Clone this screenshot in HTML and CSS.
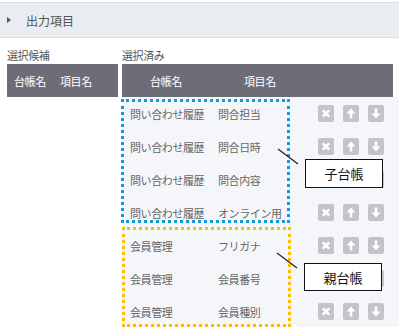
FILE: index.html
```html
<!DOCTYPE html>
<html lang="ja">
<head>
<meta charset="utf-8">
<link rel="stylesheet" href="styles.css">
</head>
<body>
<div class="topbar"><span class="tri"></span><span class="title">出力項目</span></div>
<div class="panes">
  <div class="pane left">
    <div class="label">選択候補</div>
    <div class="thead"><span class="h1">台帳名</span><span>項目名</span></div>
  </div>
  <div class="pane right">
    <div class="label">選択済み</div>
    <div class="thead"><span class="h1">台帳名</span><span>項目名</span></div>
    <div class="list">
      <div class="row"><span class="c1">問い合わせ履歴</span><span class="c2">問合担当</span><span class="btns"><span class="btn"><svg viewBox="0 0 16 17"><path d="M4.8 5.3l6.4 6.4M11.2 5.3l-6.4 6.4"/></svg></span><span class="btn"><svg viewBox="0 0 16 17"><path class="f" d="M8 3.5l4.5 5H3.5z"/><path d="M8 7.5v6"/></svg></span><span class="btn"><svg viewBox="0 0 16 17"><path class="f" d="M8 13.5l4.5-5H3.5z"/><path d="M8 3.5v6"/></svg></span></span></div>
      <div class="row"><span class="c1">問い合わせ履歴</span><span class="c2">問合日時</span><span class="btns"><span class="btn"><svg viewBox="0 0 16 17"><path d="M4.8 5.3l6.4 6.4M11.2 5.3l-6.4 6.4"/></svg></span><span class="btn"><svg viewBox="0 0 16 17"><path class="f" d="M8 3.5l4.5 5H3.5z"/><path d="M8 7.5v6"/></svg></span><span class="btn"><svg viewBox="0 0 16 17"><path class="f" d="M8 13.5l4.5-5H3.5z"/><path d="M8 3.5v6"/></svg></span></span></div>
      <div class="row"><span class="c1">問い合わせ履歴</span><span class="c2">問合内容</span><span class="btns"><span class="btn"><svg viewBox="0 0 16 17"><path d="M4.8 5.3l6.4 6.4M11.2 5.3l-6.4 6.4"/></svg></span><span class="btn"><svg viewBox="0 0 16 17"><path class="f" d="M8 3.5l4.5 5H3.5z"/><path d="M8 7.5v6"/></svg></span><span class="btn"><svg viewBox="0 0 16 17"><path class="f" d="M8 13.5l4.5-5H3.5z"/><path d="M8 3.5v6"/></svg></span></span></div>
      <div class="row"><span class="c1">問い合わせ履歴</span><span class="c2">オンライン用</span><span class="btns"><span class="btn"><svg viewBox="0 0 16 17"><path d="M4.8 5.3l6.4 6.4M11.2 5.3l-6.4 6.4"/></svg></span><span class="btn"><svg viewBox="0 0 16 17"><path class="f" d="M8 3.5l4.5 5H3.5z"/><path d="M8 7.5v6"/></svg></span><span class="btn"><svg viewBox="0 0 16 17"><path class="f" d="M8 13.5l4.5-5H3.5z"/><path d="M8 3.5v6"/></svg></span></span></div>
      <div class="row"><span class="c1">会員管理</span><span class="c2">フリガナ</span><span class="btns"><span class="btn"><svg viewBox="0 0 16 17"><path d="M4.8 5.3l6.4 6.4M11.2 5.3l-6.4 6.4"/></svg></span><span class="btn"><svg viewBox="0 0 16 17"><path class="f" d="M8 3.5l4.5 5H3.5z"/><path d="M8 7.5v6"/></svg></span><span class="btn"><svg viewBox="0 0 16 17"><path class="f" d="M8 13.5l4.5-5H3.5z"/><path d="M8 3.5v6"/></svg></span></span></div>
      <div class="row"><span class="c1">会員管理</span><span class="c2">会員番号</span><span class="btns"><span class="btn"><svg viewBox="0 0 16 17"><path d="M4.8 5.3l6.4 6.4M11.2 5.3l-6.4 6.4"/></svg></span><span class="btn"><svg viewBox="0 0 16 17"><path class="f" d="M8 3.5l4.5 5H3.5z"/><path d="M8 7.5v6"/></svg></span><span class="btn"><svg viewBox="0 0 16 17"><path class="f" d="M8 13.5l4.5-5H3.5z"/><path d="M8 3.5v6"/></svg></span></span></div>
      <div class="row"><span class="c1">会員管理</span><span class="c2">会員種別</span><span class="btns"><span class="btn"><svg viewBox="0 0 16 17"><path d="M4.8 5.3l6.4 6.4M11.2 5.3l-6.4 6.4"/></svg></span><span class="btn"><svg viewBox="0 0 16 17"><path class="f" d="M8 3.5l4.5 5H3.5z"/><path d="M8 7.5v6"/></svg></span><span class="btn"><svg viewBox="0 0 16 17"><path class="f" d="M8 13.5l4.5-5H3.5z"/><path d="M8 3.5v6"/></svg></span></span></div>

      <div class="group blue"></div>
      <div class="group orange"></div>
      <svg class="leaders" viewBox="0 0 277 231"><path d="M156 52L176 67M155 156L175 171"/></svg>
      <div class="callout child">子台帳</div>
      <div class="callout parent">親台帳</div>
    </div>
  </div>
</div>
</body>
</html>
```

FILE: styles.css
```css
html, body {
  margin: 0;
  padding: 0;
  background: #fff;
  font-family: "Noto Sans CJK JP", "Noto Sans", sans-serif;
}

.topbar {
  margin-top: 2px;
  height: 34px;
  border-top: 1px solid #dcdfe3;
  border-bottom: 1px solid #dcdfe3;
  background: #e9ecf0;
  display: flex;
  align-items: center;
  padding-left: 7px;
}

.tri {
  width: 0;
  height: 0;
  border-left: 4px solid #555;
  border-top: 3.5px solid transparent;
  border-bottom: 3.5px solid transparent;
  margin-right: 15px;
}

.title {
  font-size: 12px;
  color: #555;
}

.panes {
  display: flex;
  gap: 4px;
  padding-left: 7px;
  margin-top: 8px;
}

.pane.left {
  width: 111px;
}

.pane.right {
  flex: 1;
}

.label {
  font-size: 11px;
  letter-spacing: -0.4px;
  line-height: 18px;
  color: #555;
}

.thead {
  height: 33px;
  background: #6e6d77;
  color: #fff;
  font-size: 11px;
  letter-spacing: -0.4px;
  display: flex;
  align-items: center;
}

.left .thead {
  padding-left: 7px;
}

.left .thead .h1 {
  width: 46px;
}

.right .thead {
  margin-right: 6px;
  padding-left: 28px;
}

.right .thead .h1 {
  width: 94px;
}

.list {
  position: relative;
  background: #f5f6fa;
  height: 230px;
}

.row {
  height: 33px;
  display: flex;
  align-items: center;
  padding-left: 8px;
  font-size: 11px;
  letter-spacing: -0.4px;
  color: #666;
}

.c1 {
  width: 88px;
  white-space: nowrap;
}

.c2 {
  width: 100px;
  white-space: nowrap;
}

.btns {
  display: flex;
  gap: 9px;
}

.btn {
  width: 16px;
  height: 17px;
  background: #c2c4c7;
  border-radius: 2px;
  display: flex;
}

.btn svg {
  width: 16px;
  height: 17px;
  fill: none;
  stroke: #fff;
  stroke-width: 2.6;
}

.btn svg .f {
  fill: #fff;
  stroke: none;
}

.group {
  position: absolute;
  box-sizing: border-box;
  width: 169px;
}

.group.blue {
  left: -1px;
  top: 2px;
  height: 124px;
  border: 3px dotted #119cd8;
}

.group.orange {
  left: 0;
  top: 130px;
  height: 100px;
  border: 3px dotted #fbbc05;
}

.leaders {
  position: absolute;
  left: 0;
  top: 0;
  width: 277px;
  height: 231px;
  fill: none;
  stroke: #222;
  stroke-width: 1.2;
}

.callout {
  position: absolute;
  box-sizing: border-box;
  width: 78px;
  border: 1px solid #111;
  background: #fff;
  color: #111;
  font-size: 13px;
  display: flex;
  align-items: center;
  justify-content: center;
}

.callout.child {
  left: 183px;
  top: 62px;
  height: 29px;
}

.callout.parent {
  left: 182px;
  top: 166px;
  height: 28px;
}
```
